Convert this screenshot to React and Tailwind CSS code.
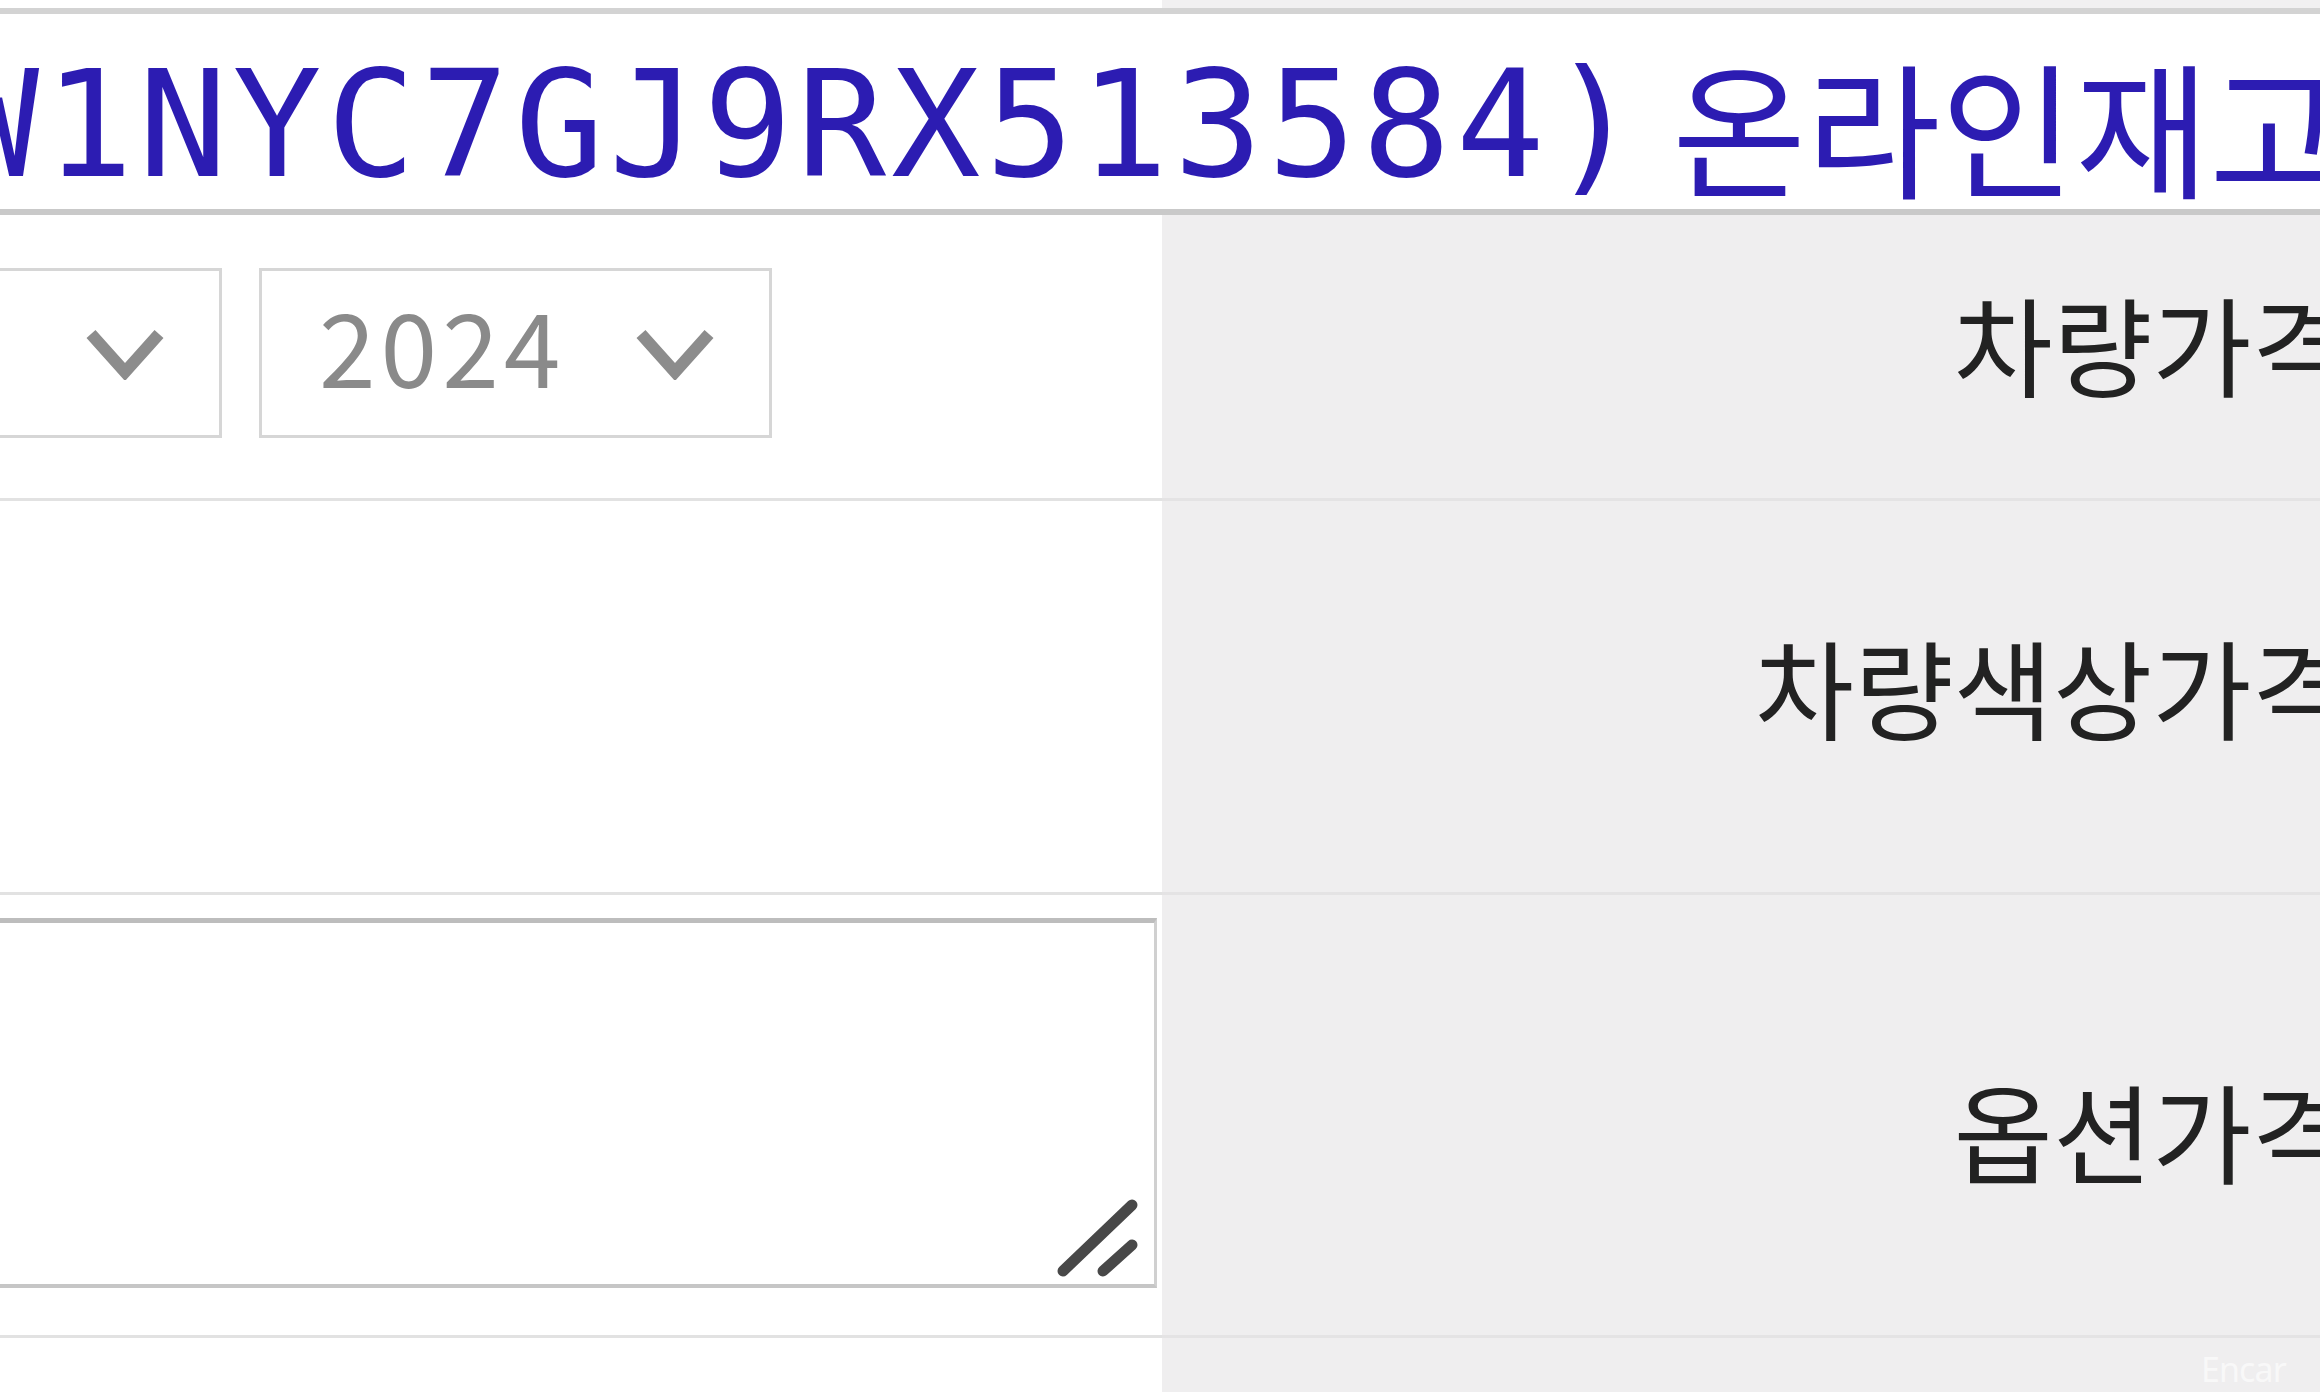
import React from "react";

// 셀렉트 박스 (크게 확대된 화면이라 치수가 큼)
function SelectBox({ value, className }) {
  return (
    <div
      className={
        "h-[170px] w-[513px] shrink-0 border-[3px] border-[#d6d6d6] bg-white flex items-center justify-between pl-[57px] pr-[54px] " +
        className
      }
    >
      <span className="mb-[18px] text-[102px] leading-none tracking-[5px] text-[#8a8a8a] font-['Noto_Sans_CJK_KR','Noto_Sans',sans-serif]">
        {value}
      </span>
      <svg width="80" height="54" viewBox="0 0 80 54">
        <polyline
          points="6,8 40,46 74,8"
          fill="none"
          stroke="#8c8c8c"
          strokeWidth="12"
        />
      </svg>
    </div>
  );
}

function Label({ children, className }) {
  return (
    <div
      className={
        "bg-[#efeeef] border-b-[3px] border-[#e4e3e4] flex items-center justify-end pr-[61px] " +
        className
      }
    >
      <span className="text-[108px] leading-none text-[#222222] whitespace-nowrap font-['Noto_Sans_CJK_KR',sans-serif]">
        {children}
      </span>
    </div>
  );
}

export default function App() {
  return (
    <div className="w-[2320px] h-[1392px] overflow-hidden bg-white flex flex-col">
      {/* 윗줄 */}
      <div className="h-[8px] grid grid-cols-[1162px_1250px]">
        <div className="bg-white" />
        <div className="bg-[#f1f0f1]" />
      </div>
      <div className="h-[6px] bg-[#d3d3d3]" />

      {/* 차량 제목 */}
      <div className="h-[195px] bg-white flex items-start pt-[37px] overflow-hidden">
        <span className="ml-[-144px] whitespace-nowrap text-[148px] leading-none tracking-[5px] text-[#2c1cb2] font-['DejaVu_Sans_Mono',monospace]">
          (W1NYC7GJ9RX513584)
        </span>
        <span className="ml-[28px] whitespace-nowrap text-[146px] leading-none text-[#2c1cb2] font-['Noto_Sans_CJK_KR',sans-serif]">
          온라인재고 차량
        </span>
      </div>
      <div className="h-[6px] bg-[#c9c9c9]" />

      {/* 연식 */}
      <div className="grid grid-cols-[1162px_1250px]">
        <div className="h-[286px] border-b-[3px] border-[#e2e2e2] flex items-center gap-[37px] pb-[8px]">
          <SelectBox value="12" className="ml-[-291px]" />
          <SelectBox value="2024" />
        </div>
        <Label className="h-[286px] pb-[30px]">차량가격</Label>
      </div>

      {/* 색상 */}
      <div className="grid grid-cols-[1162px_1250px]">
        <div className="h-[394px] border-b-[3px] border-[#e2e2e2]" />
        <Label className="h-[394px] pb-[24px]">차량색상가격</Label>
      </div>

      {/* 옵션 */}
      <div className="grid grid-cols-[1162px_1250px]">
        <div className="h-[443px] border-b-[3px] border-[#e2e2e2] pt-[23px] pr-[5px]">
          <div className="h-[370px] border-t-[5px] border-t-[#bdbdbd] border-r-[3px] border-r-[#d0d0d0] border-b-[4px] border-b-[#c6c6c6] bg-white flex items-end justify-end pr-[14px] pb-[6px]">
            <svg width="85" height="80" viewBox="0 0 85 80">
              <line x1="77" y1="7" x2="8" y2="73" stroke="#484848" strokeWidth="11" strokeLinecap="round" />
              <line x1="77" y1="47" x2="48" y2="73" stroke="#484848" strokeWidth="11" strokeLinecap="round" />
            </svg>
          </div>
        </div>
        <Label className="h-[443px] pt-[28px]">옵션가격</Label>
      </div>

      {/* 하단 */}
      <div className="grid grid-cols-[1162px_1250px] flex-1">
        <div className="bg-white" />
        <div className="bg-[#efeeef] flex items-start justify-end pr-[126px] pt-[14px]">
          <span className="text-[34px] leading-none tracking-tight text-white/60 font-['Noto_Sans',sans-serif]">
            Encar
          </span>
        </div>
      </div>
    </div>
  );
}
